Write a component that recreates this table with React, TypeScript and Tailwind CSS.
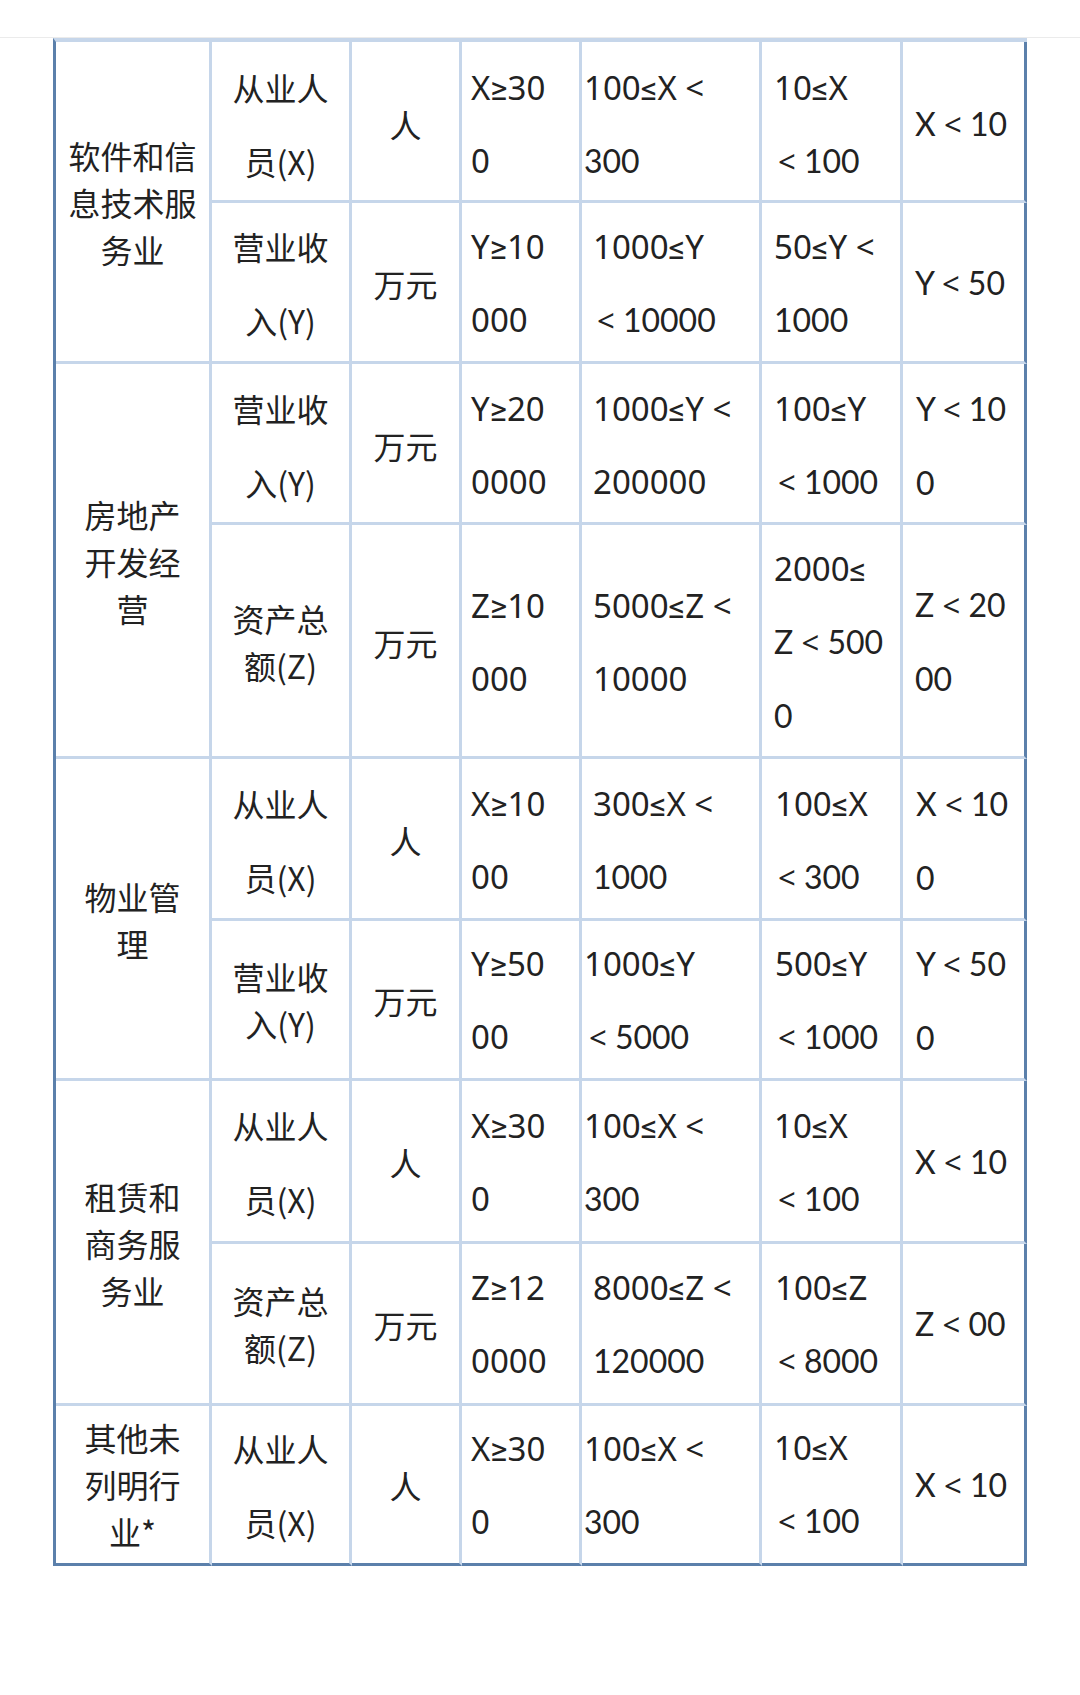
import React from "react";

type Line = { t: string; c: string; lato?: boolean };
type Cell = {
  lines: Line[];
  cls: string;
};

const R = "font-['Noto_Sans','Roboto',sans-serif] text-[33px] leading-[73px] whitespace-pre";
const L = "font-['Lato','Noto_Sans',sans-serif] text-[32px] leading-[73px] whitespace-pre";
const CJK_WIDE = "font-['Noto_Sans_CJK_SC','Noto_Sans',sans-serif] text-[32px] leading-[74px] text-center whitespace-pre";
const CJK_TIGHT = "font-['Noto_Sans_CJK_SC','Noto_Sans',sans-serif] text-[32px] leading-[47px] text-center whitespace-pre";

const base = "border-r-[3px] border-b-[3px] border-[#c6d6ea] flex flex-col justify-center text-[#222]";

const r = (t: string, p: string): Line => ({ t, c: `${R} ${p}` });
const l = (t: string, p: string): Line => ({ t, c: `${L} ${p}`, lato: true });
const w = (...ts: string[]): Line[] => ts.map((t) => ({ t, c: CJK_WIDE }));
const n = (...ts: string[]): Line[] => ts.map((t) => ({ t, c: CJK_TIGHT }));

const P2 = "pl-[2px]";
const P7 = "pl-[7px]";
const P9 = "pl-[9px]";
const P11 = "pl-[11px]";
const P12 = "pl-[12px]";
const P13 = "pl-[13px]";
const P15 = "pl-[15px]";
const P17 = "pl-[16px]";

const cells: Cell[] = [
  // Row 1
  { lines: n("软件和信", "息技术服", "务业"), cls: "row-span-2 pt-[2px]" },
  { lines: w("从业人", "员(X)"), cls: "pt-[6px]" },
  { lines: w("人"), cls: "pt-[6px]" },
  { lines: [r("X≥30", P9), r("0", P9)], cls: "pt-[6px]" },
  { lines: [r("100≤X <", P2), l("300", P2)], cls: "pt-[6px]" },
  { lines: [r("10≤X", P12), l("< 100", P17)], cls: "pt-[6px]" },
  { lines: [l("X < 10", P12)], cls: "pt-[6px] border-r-[#5b80ab]" },
  // Row 2
  { lines: w("营业收", "入(Y)"), cls: "pt-[2px]" },
  { lines: w("万元"), cls: "pt-[2px]" },
  { lines: [r("Y≥10", P9), r("000", P9)], cls: "pt-[2px]" },
  { lines: [r("1000≤Y", P11), l("< 10000", P15)], cls: "pt-[2px]" },
  { lines: [r("50≤Y <", P12), l("1000", P12)], cls: "pt-[2px]" },
  { lines: [l("Y < 50", P12)], cls: "pt-[2px] border-r-[#5b80ab]" },
  // Row 3
  { lines: n("房地产", "开发经", "营"), cls: "row-span-2 pt-[2px]" },
  { lines: w("营业收", "入(Y)"), cls: "pt-[4px]" },
  { lines: w("万元"), cls: "pt-[4px]" },
  { lines: [r("Y≥20", P9), r("0000", P9)], cls: "pt-[4px]" },
  { lines: [r("1000≤Y <", P11), r("200000", P11)], cls: "pt-[4px]" },
  { lines: [r("100≤Y", P12), l("< 1000", P17)], cls: "pt-[4px]" },
  { lines: [l("Y < 10", P13), l("0", P13)], cls: "pt-[4px] border-r-[#5b80ab]" },
  // Row 4
  { lines: n("资产总", "额(Z)"), cls: "pt-[2px]" },
  { lines: w("万元"), cls: "pt-[2px]" },
  { lines: [r("Z≥10", P9), r("000", P9)], cls: "pt-[2px]" },
  { lines: [r("5000≤Z <", P11), r("10000", P11)], cls: "pt-[2px]" },
  { lines: [r("2000≤", P12), l("Z < 500", P12), l("0", P12)], cls: "pt-[2px]" },
  { lines: [l("Z < 20", P12), l("00", P12)], cls: "pt-[2px] border-r-[#5b80ab]" },
  // Row 5
  { lines: n("物业管", "理"), cls: "row-span-2 pt-[2px]" },
  { lines: w("从业人", "员(X)"), cls: "pt-[3px]" },
  { lines: w("人"), cls: "pt-[3px]" },
  { lines: [r("X≥10", P9), r("00", P9)], cls: "pt-[3px]" },
  { lines: [r("300≤X <", P11), l("1000", P11)], cls: "pt-[3px]" },
  { lines: [r("100≤X", P13), l("< 300", P17)], cls: "pt-[3px]" },
  { lines: [l("X < 10", P13), l("0", P13)], cls: "pt-[3px] border-r-[#5b80ab]" },
  // Row 6
  { lines: n("营业收", "入(Y)"), cls: "pt-[1px]" },
  { lines: w("万元"), cls: "pt-[1px]" },
  { lines: [r("Y≥50", P9), r("00", P9)], cls: "pt-[1px]" },
  { lines: [r("1000≤Y", P2), l("< 5000", P7)], cls: "pt-[1px]" },
  { lines: [r("500≤Y", P13), l("< 1000", P17)], cls: "pt-[1px]" },
  { lines: [l("Y < 50", P13), l("0", P13)], cls: "pt-[1px] border-r-[#5b80ab]" },
  // Row 7
  { lines: n("租赁和", "商务服", "务业"), cls: "row-span-2 pt-[2px]" },
  { lines: w("从业人", "员(X)"), cls: "pt-[2px]" },
  { lines: w("人"), cls: "pt-[2px]" },
  { lines: [r("X≥30", P9), r("0", P9)], cls: "pt-[2px]" },
  { lines: [r("100≤X <", P2), l("300", P2)], cls: "pt-[2px]" },
  { lines: [r("10≤X", P12), l("< 100", P17)], cls: "pt-[2px]" },
  { lines: [l("X < 10", P12)], cls: "pt-[2px] border-r-[#5b80ab]" },
  // Row 8
  { lines: n("资产总", "额(Z)"), cls: "pt-[1px]" },
  { lines: w("万元"), cls: "pt-[1px]" },
  { lines: [r("Z≥12", P9), r("0000", P9)], cls: "pt-[1px]" },
  { lines: [r("8000≤Z <", P11), l("120000", P11)], cls: "pt-[1px]" },
  { lines: [r("100≤Z", P13), l("< 8000", P17)], cls: "pt-[1px]" },
  { lines: [l("Z < 00", P12)], cls: "pt-[1px] border-r-[#5b80ab]" },
  // Row 9
  { lines: n("其他未", "列明行", "业*"), cls: "border-b-[#5b80ab]" },
  { lines: w("从业人", "员(X)"), cls: "border-b-[#5b80ab]" },
  { lines: w("人"), cls: "border-b-[#5b80ab]" },
  { lines: [r("X≥30", P9), r("0", P9)], cls: "border-b-[#5b80ab]" },
  { lines: [r("100≤X <", P2), l("300", P2)], cls: "border-b-[#5b80ab]" },
  { lines: [r("10≤X", P12), l("< 100", P17)], cls: "border-b-[#5b80ab]" },
  { lines: [l("X < 10", P12)], cls: "border-b-[#5b80ab] border-r-[#5b80ab]" },
];

function LatoText({ t }: { t: string }) {
  const parts = t.split("<");
  return (
    <>
      {parts.map((p, i) => (
        <React.Fragment key={i}>
          {i > 0 && <span className="font-['Noto_Sans',sans-serif] text-[31px]">{"<"}</span>}
          {p}
        </React.Fragment>
      ))}
    </>
  );
}

export default function App() {
  return (
    <div className="min-h-[1695px] w-[1080px] bg-white">
      <div className="h-[38px] border-b border-[#ebebeb] bg-white" />
      <div className="ml-[53px] w-[974px] border-l-[3px] border-t-[4px] border-l-[#5b80ab] border-t-[#c6d6ea]">
        <div className="grid grid-cols-[156px_140px_110px_120px_180px_141px_124px] grid-rows-[161px_161px_161px_234px_162px_160px_163px_162px_160px]">
          {cells.map((cell, i) => (
            <div key={i} className={`${base} ${cell.cls}`}>
              {cell.lines.map((ln, j) => (
                <div key={j} className={ln.c}>
                  {ln.lato ? <LatoText t={ln.t} /> : ln.t}
                </div>
              ))}
            </div>
          ))}
        </div>
      </div>
    </div>
  );
}
